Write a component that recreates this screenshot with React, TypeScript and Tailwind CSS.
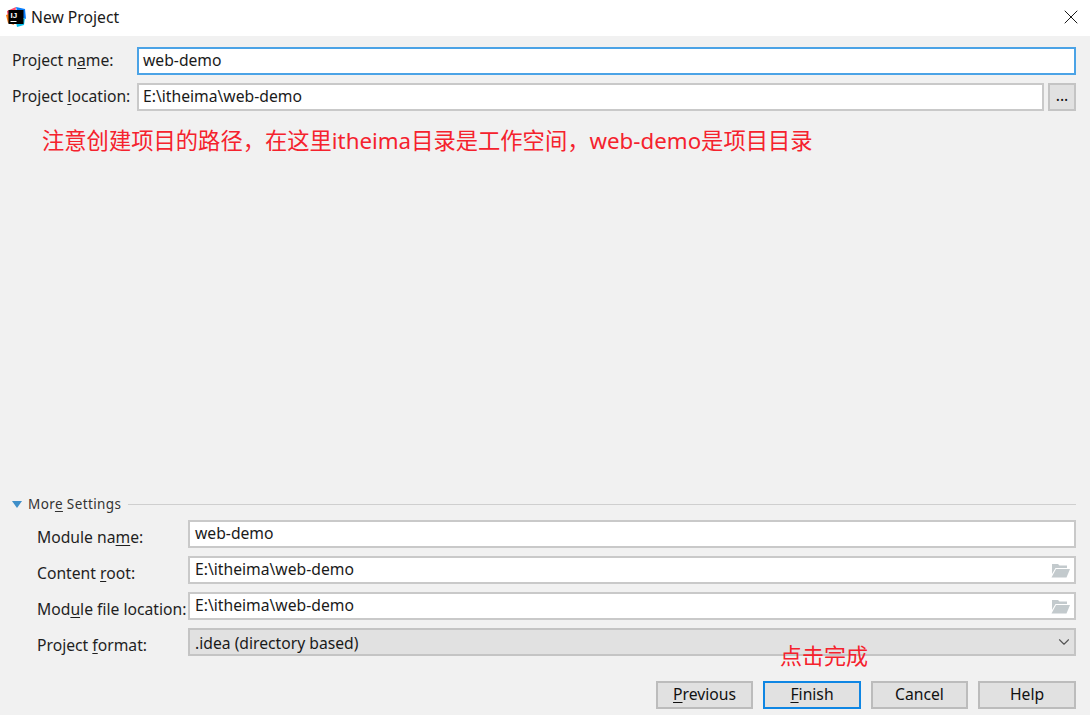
import type { ReactNode } from "react";
import { ChevronDown, X } from "lucide-react";

const font = { fontFamily: '"Noto Sans", "Noto Sans CJK SC", sans-serif' };

const IdeaLogo = () => (
  <svg width="20" height="20" viewBox="0 0 20 20" className="shrink-0">
    <path d="M1 4 L10 0 L9 9 L2 11 Z" fill="#fc4a6a" />
    <path d="M0 8 L6 6 L8 18 L2 16 Z" fill="#f97a12" />
    <path d="M10 0 L19 2 L20 12 L12 9 Z" fill="#087cfa" />
    <path d="M10 15 L19 11 L18 18 L11 20 Z" fill="#07c3f2" />
    <rect x="2.5" y="3" width="15" height="14" fill="#000" />
    <rect x="4.5" y="14" width="6" height="1" fill="#fff" />
    <text x="4.5" y="11" fontSize="8" fontWeight="700" fill="#fff" fontFamily="Liberation Sans, sans-serif">
      IJ
    </text>
  </svg>
);

const FolderIcon = () => (
  <svg width="19" height="15" viewBox="0 0 19 15" className="shrink-0">
    <path d="M1 1 H7 L8.5 2.5 H16 V5 H4.5 L1 11 Z" fill="#c3cacd" />
    <path d="M5 6 H19 L15.5 14.5 H0.5 Z" fill="#c3cacd" />
  </svg>
);

const Field = ({ value, icon, className = "" }: { value: string; icon?: ReactNode; className?: string }) => (
  <div
    className={`flex h-[28px] flex-1 items-center justify-between border-2 bg-white pr-[4px] text-[#1a1a1a] ${className}`}
  >
    <span className="leading-none">{value}</span>
    {icon}
  </div>
);

const Row = ({ label, value, icon }: { label: ReactNode; value: string; icon?: boolean }) => (
  <div className="flex h-[28px] items-center">
    <div className="w-[151px] shrink-0 whitespace-nowrap pt-[7px] leading-none text-[#1f1f1f]">{label}</div>
    <Field value={value} icon={icon ? <FolderIcon /> : undefined} className="border-[#c9c9c9] pl-[5px]" />
  </div>
);

const FooterButton = ({ children, width, focused }: { children: ReactNode; width: string; focused?: boolean }) => (
  <button
    className={`flex h-[28px] items-center justify-center border-2 bg-[#e1e1e1] text-[#111] ${width} ${
      focused ? "border-[#0f86e3]" : "border-[#bcbcbc]"
    }`}
  >
    {children}
  </button>
);

export default function App() {
  return (
    <div className="relative flex h-[715px] w-[1090px] flex-col overflow-hidden bg-[#f1f1f1] text-[15.7px]" style={font}>
      <div className="flex h-[36px] shrink-0 items-center justify-between bg-white pb-[2px] pl-[6px] pr-[7px]">
        <div className="flex items-center gap-[5px]">
          <IdeaLogo />
          <span className="pt-[2px] text-[#1a1a1a]">New Project</span>
        </div>
        <X size={24} strokeWidth={0.9} className="text-black" />
      </div>

      <div className="flex flex-1 flex-col pl-[12px] pr-[14px] pt-[11px]">
        <div className="flex items-center">
          <div className="w-[125px] shrink-0 whitespace-nowrap text-[#1f1f1f]">
            Project n<u className="underline-offset-2">a</u>me:
          </div>
          <Field value="web-demo" className="border-[#4ba3e6] pl-[4px]" />
        </div>
        <div className="mt-[8px] flex items-center">
          <div className="w-[125px] shrink-0 whitespace-nowrap text-[#1f1f1f]">
            Project <u className="underline-offset-2">l</u>ocation:
          </div>
          <Field value="E:\itheima\web-demo" className="border-[#c9c9c9] pl-[4px]" />
          <button className="ml-[4px] flex h-[28px] w-[28px] items-center justify-center border-2 border-[#c4c4c4] bg-[#e1e1e1] pb-[2px] text-[#111]">
            ...
          </button>
        </div>

        <p className="ml-[30px] mt-[14px] whitespace-nowrap text-[22.3px] leading-[32px] text-[#f5222d]">
          注意创建项目的路径，在这里itheima目录是工作空间，web-demo是项目目录
        </p>

        <div className="mt-[338px] flex h-[18px] items-center">
          <svg width="10" height="7" viewBox="0 0 10 7" className="shrink-0">
            <path d="M0 0 H10 L5 7 Z" fill="#3f8fc9" />
          </svg>
          <span className="ml-[6px] whitespace-nowrap text-[13.5px] tracking-[0.4px] text-[#333]">
            Mor<u className="underline-offset-2">e</u> Settings
          </span>
          <div className="ml-[7px] h-px flex-1 bg-[#cfcfcf]" />
        </div>

        <div className="ml-[25px] mt-[7px] flex flex-col gap-[8px]">
          <Row label={<>Module na<u className="underline-offset-2">m</u>e:</>} value="web-demo" />
          <Row label={<>Content <u className="underline-offset-2">r</u>oot:</>} value="E:\itheima\web-demo" icon />
          <Row label={<>Mod<u className="underline-offset-2">u</u>le file location:</>} value="E:\itheima\web-demo" icon />
          <div className="flex h-[28px] items-center">
            <div className="w-[151px] shrink-0 whitespace-nowrap pt-[7px] leading-none text-[#1f1f1f]">
              Project <u className="underline-offset-2">f</u>ormat:
            </div>
            <div className="flex h-[28px] flex-1 items-center justify-between border-2 border-[#c4c4c4] bg-[#e1e1e1] pl-[5px] pr-[1px] text-[#1a1a1a]">
              <span className="pt-[3px] leading-none">.idea (directory based)</span>
              <ChevronDown size={18} strokeWidth={1.5} className="text-[#555]" />
            </div>
          </div>
        </div>

        <div className="mt-[25px] flex justify-end gap-[10px]">
          <FooterButton width="w-[97px]"><span><u className="underline-offset-2">P</u>revious</span></FooterButton>
          <FooterButton width="w-[98px]" focused><span><u className="underline-offset-2">F</u>inish</span></FooterButton>
          <FooterButton width="w-[97px]">Cancel</FooterButton>
          <FooterButton width="w-[98px]">Help</FooterButton>
        </div>
      </div>

      <span className="absolute left-[780px] top-[639px] text-[22px] leading-[32px] text-[#f5222d]">点击完成</span>
    </div>
  );
}
